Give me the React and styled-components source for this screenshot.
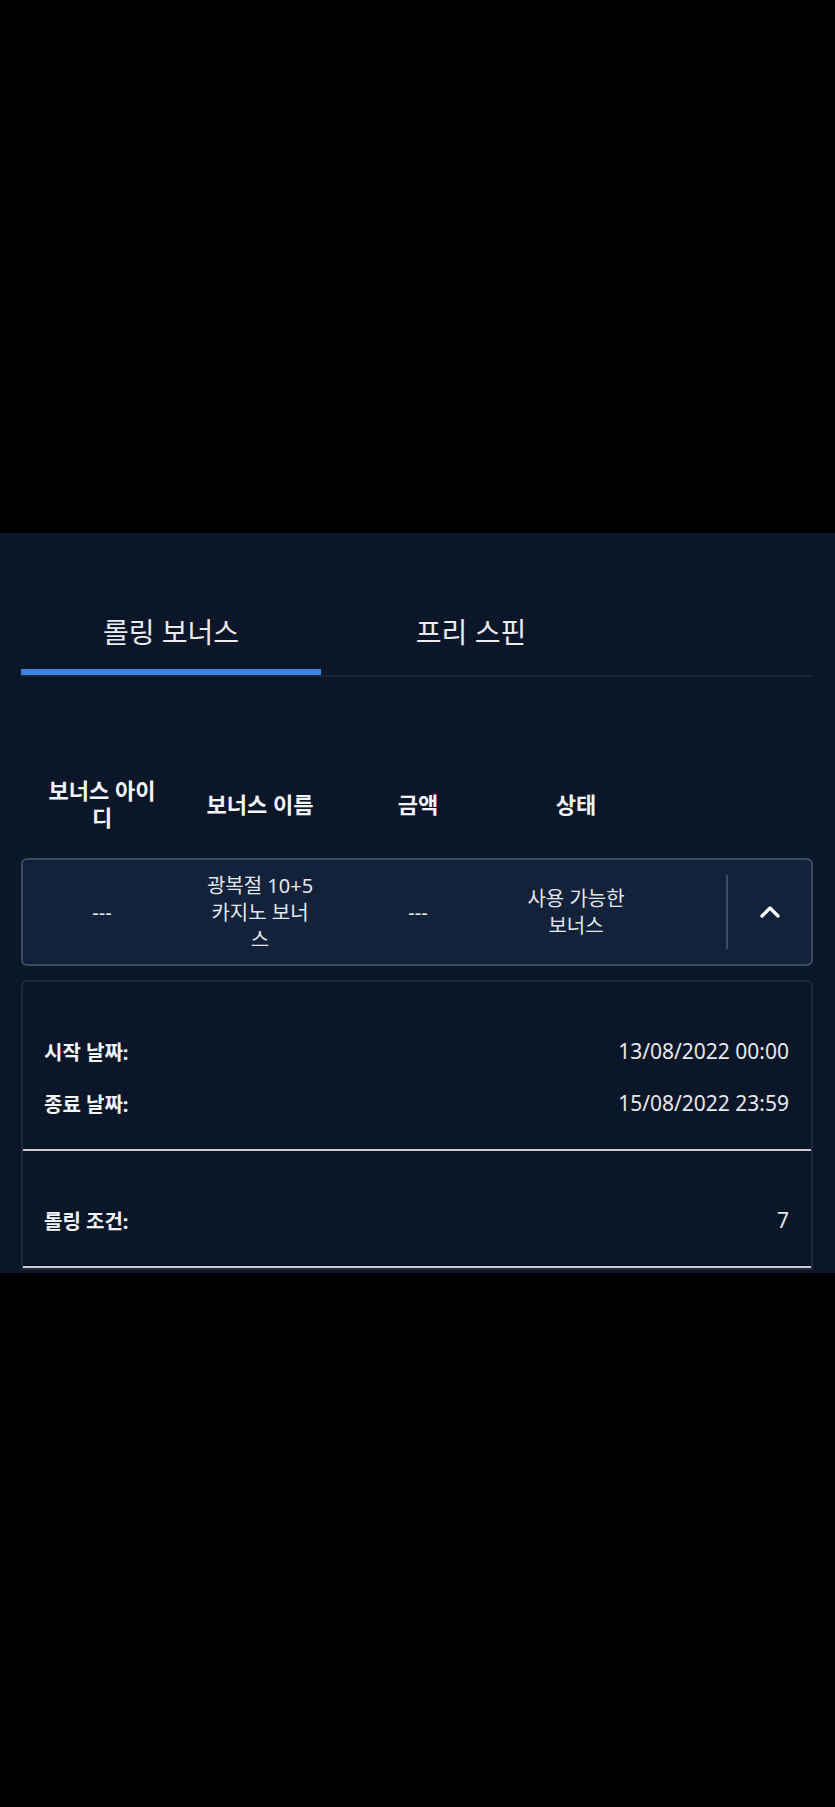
import React, { useState } from 'react';
import styled, { createGlobalStyle } from 'styled-components';

const GlobalStyle = createGlobalStyle`
  html, body {
    margin: 0;
    padding: 0;
    background: #000000;
  }
  * {
    box-sizing: border-box;
  }
  body {
    font-family: "Noto Sans", "Noto Sans CJK KR", sans-serif;
    color: #e6e9ee;
  }
`;

const Page = styled.div`
  display: flex;
  flex-direction: column;
  padding-top: 533px;
`;

const Panel = styled.section`
  height: 740px;
  overflow: hidden;
  background: #0b1728;
  padding: 60px 22px 0 21px;
`;

const TabBar = styled.div`
  display: flex;
  border-bottom: 2px solid #1c2636;
`;

const Tab = styled.button`
  width: 300px;
  padding: 21px 0 19px;
  background: none;
  border: none;
  border-bottom: 6px solid ${props => (props.active ? '#3d84e6' : 'transparent')};
  color: #e8ebef;
  font-family: "Noto Sans", "Noto Sans CJK KR", sans-serif;
  font-size: 28px;
  line-height: 36px;
  text-align: center;
  cursor: pointer;
`;

const HeaderRow = styled.div`
  display: grid;
  grid-template-columns: repeat(4, 158px) 1fr 85px;
  align-items: center;
  height: 84px;
  margin-top: 85px;
  padding: 0 2px;
`;

const HeaderCell = styled.div`
  padding: 0 22px;
  font-size: 22px;
  font-weight: 700;
  line-height: 27px;
  color: #f2f4f7;
  text-align: center;
`;

const BonusRow = styled.div`
  display: grid;
  grid-template-columns: repeat(4, 158px) 1fr 85px;
  align-items: center;
  min-height: 108px;
  margin-top: 12px;
  background: #12223b;
  border: 2px solid #3b4b62;
  border-radius: 6px;
`;

const Cell = styled.div`
  padding: 0 22px;
  font-size: 20px;
  line-height: 27px;
  color: #e3e7ec;
  text-align: center;
`;

const ToggleCell = styled.button`
  grid-column: 6;
  height: 74px;
  display: flex;
  align-items: center;
  justify-content: center;
  background: none;
  border: none;
  border-left: 2px solid #3b4b62;
  cursor: pointer;
  padding: 0;
`;

const Chevron = styled.svg`
  transform: rotate(${props => (props.open ? '0deg' : '180deg')});
`;

const DetailCard = styled.div`
  margin-top: 14px;
  border: 2px solid #1e2a3a;
  border-radius: 6px 6px 0 0;
`;

const DetailSection = styled.div`
  display: flex;
  flex-direction: column;
  gap: 24px;
  padding: 55px 22px 32px 21px;
  border-bottom: 2px solid #c8cacd;
`;

const DetailRow = styled.div`
  display: flex;
  justify-content: space-between;
  align-items: center;
  height: 28px;
`;

const Label = styled.span`
  font-size: 20px;
  font-weight: 700;
  color: #f2f4f7;
`;

const Value = styled.span`
  font-size: 21px;
  color: #e6e9ee;
`;

const App = () => {
  const [tab, setTab] = useState(0);
  const [open, setOpen] = useState(true);

  return (
    <Page>
      <GlobalStyle />
      <Panel>
        <TabBar>
          <Tab active={tab === 0} onClick={() => setTab(0)}>롤링 보너스</Tab>
          <Tab active={tab === 1} onClick={() => setTab(1)}>프리 스핀</Tab>
        </TabBar>

        <HeaderRow>
          <HeaderCell>보너스 아이디</HeaderCell>
          <HeaderCell>보너스 이름</HeaderCell>
          <HeaderCell>금액</HeaderCell>
          <HeaderCell>상태</HeaderCell>
        </HeaderRow>

        <BonusRow>
          <Cell>---</Cell>
          <Cell>광복절 10+5 카지노 보너스</Cell>
          <Cell>---</Cell>
          <Cell>사용 가능한 보너스</Cell>
          <ToggleCell onClick={() => setOpen(!open)}>
            <Chevron open={open} width="22" height="14" viewBox="0 0 22 14">
              <polyline
                points="3,11 11,3 19,11"
                fill="none"
                stroke="#ffffff"
                strokeWidth="3.2"
                strokeLinecap="round"
                strokeLinejoin="round"
              />
            </Chevron>
          </ToggleCell>
        </BonusRow>

        {open && (
          <DetailCard>
            <DetailSection>
              <DetailRow>
                <Label>시작 날짜:</Label>
                <Value>13/08/2022 00:00</Value>
              </DetailRow>
              <DetailRow>
                <Label>종료 날짜:</Label>
                <Value>15/08/2022 23:59</Value>
              </DetailRow>
            </DetailSection>
            <DetailSection>
              <DetailRow>
                <Label>롤링 조건:</Label>
                <Value>7</Value>
              </DetailRow>
            </DetailSection>
          </DetailCard>
        )}
      </Panel>
    </Page>
  );
};

export default App;
